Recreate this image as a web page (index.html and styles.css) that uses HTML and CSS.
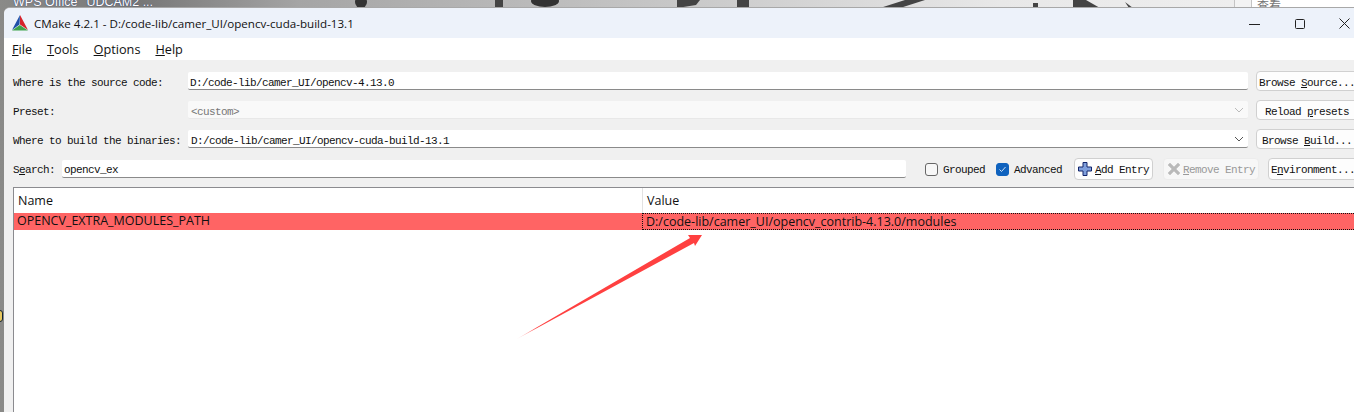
FILE: index.html
```html
<!DOCTYPE html>
<html lang="en">
<head>
    <meta charset="UTF-8">
    <meta name="viewport" content="width=device-width, initial-scale=1.0">
    <title>CMake 4.2.1</title>
    <link rel="stylesheet" href="styles.css">
</head>
<body>

<div class="desktop">
    <!-- bits of wallpaper showing above the window -->
    <svg class="wallpaper" width="1354" height="8" viewBox="0 0 1354 8">
        <ellipse cx="361" cy="2" rx="6" ry="6" fill="#333"/>
        <rect x="495" y="0" width="8" height="8" fill="#444"/>
        <ellipse cx="545" cy="1" rx="14" ry="6" fill="#333"/>
        <path d="M677 0 H700 L696 5 L677 8 Z" fill="#444"/>
        <rect x="737" y="0" width="12" height="8" fill="#444"/>
        <path d="M880 8 L905 0 H925 L900 8 Z" fill="#444"/>
        <rect x="1033" y="3" width="5" height="5" fill="#444"/>
        <path d="M1073 8 V0 H1086 L1100 8 Z" fill="#444"/>
        <path d="M1125 2 L1133 8 H1129 Z" fill="#444"/>
        <rect x="1234" y="0" width="1" height="8" fill="#c4c4c4"/>
        <rect x="1235" y="0" width="16" height="8" fill="#f3f3f3"/>
        <rect x="1251" y="0" width="1" height="8" fill="#c4c4c4"/>
        <rect x="1252" y="0" width="102" height="8" fill="#fff"/>
    </svg>
    <div class="desk-labels"><span>WPS Office</span><span>UDCAM2 ...</span></div>
    <span class="desk-right">查看</span>
    <span class="edge-mark"></span>

    <div class="window">
        <div class="titlebar">
            <svg class="logo" width="16" height="16" viewBox="0 0 16 16">
                <path d="M8 0 L0 15 L7.5 9.5 Z" fill="#1f4fa8"/>
                <path d="M8 0 L16 15 L8 9.5 Z" fill="#d5232b"/>
                <path d="M0 15.5 L7.8 10 L16 15.5 Z" fill="#3fa34a"/>
            </svg>
            <span class="title">CMake 4.2.1 - D:/code-lib/camer_UI/opencv-cuda-build-13.1</span>
            <div class="controls">
                <svg width="11" height="11" viewBox="0 0 11 11"><path d="M0 6.5 H11" stroke="#222" fill="none"/></svg>
                <svg width="11" height="11" viewBox="0 0 11 11"><rect x="1.5" y="1.5" width="9" height="9" rx="1" stroke="#222" fill="none"/></svg>
                <svg width="11" height="11" viewBox="0 0 11 11"><path d="M.5 .5 L10.5 10.5 M10.5 .5 L.5 10.5" stroke="#222" fill="none"/></svg>
            </div>
        </div>

        <div class="menubar">
            <span><u>F</u>ile</span>
            <span><u>T</u>ools</span>
            <span><u>O</u>ptions</span>
            <span><u>H</u>elp</span>
        </div>

        <div class="content">
            <div class="form-row">
                <label class="row-label">Where is the source code:</label>
                <div class="field">D:/code-lib/camer_UI/opencv-4.13.0</div>
                <button class="btn"><span>Browse <u>S</u>ource...</span></button>
            </div>
            <div class="form-row">
                <label class="row-label">Preset:</label>
                <div class="field disabled">&lt;custom&gt;<svg class="chev" width="10" height="6" viewBox="0 0 10 6"><path d="M1 1 L5 5 L9 1" stroke="#bbb" fill="none"/></svg></div>
                <button class="btn"><span>Reload <u>p</u>resets</span></button>
            </div>
            <div class="form-row">
                <label class="row-label">Where to build the binaries:</label>
                <div class="field combo">D:/code-lib/camer_UI/opencv-cuda-build-13.1<svg class="chev" width="10" height="6" viewBox="0 0 10 6"><path d="M1 1 L5 5 L9 1" stroke="#555" fill="none"/></svg></div>
                <button class="btn"><span>Browse <u>B</u>uild...</span></button>
            </div>
            <div class="form-row search-row">
                <label class="row-label">S<u>e</u>arch:</label>
                <div class="field search">opencv_ex</div>
                <label class="check"><span class="box"></span><span class="check-text">Grouped</span></label>
                <label class="check"><span class="box on"><svg width="9" height="9" viewBox="0 0 9 9"><path d="M1.5 4.5 L3.5 6.5 L7.5 2" stroke="#cfe2f7" fill="none"/></svg></span><span class="check-text">Advanced</span></label>
                <button class="btn add">
                    <svg width="14" height="14" viewBox="0 0 14 14"><path d="M5 .5 H9 V5 H13.5 V9 H9 V13.5 H5 V9 H.5 V5 H5 Z" fill="#7f9fdc" stroke="#12246b"/></svg>
                    <span><u>A</u>dd Entry</span>
                </button>
                <button class="btn remove" disabled>
                    <svg width="14" height="14" viewBox="0 0 14 14"><path d="M1 3 L3 1 L7 5 L11 1 L13 3 L9 7 L13 11 L11 13 L7 9 L3 13 L1 11 L5 7 Z" fill="#b9b9b9" stroke="#c9c9c9"/></svg>
                    <span><u>R</u>emove Entry</span>
                </button>
                <button class="btn env"><span>E<u>n</u>vironment...</span></button>
            </div>

            <div class="table">
                <div class="thead">
                    <div class="col-name">Name</div>
                    <div class="col-value">Value</div>
                </div>
                <div class="trow">
                    <div class="col-name">OPENCV_EXTRA_MODULES_PATH</div>
                    <div class="col-value current">D:/code-lib/camer_UI/opencv_contrib-4.13.0/modules</div>
                </div>
            </div>
        </div>
    </div>

    <!-- annotation drawn on top of the screenshot -->
    <svg class="arrow" width="200" height="115" viewBox="0 0 200 115">
        <defs>
            <linearGradient id="fade" gradientUnits="userSpaceOnUse" x1="10" y1="110" x2="190" y2="10">
                <stop offset="0" stop-color="#ff4040" stop-opacity="0"/>
                <stop offset=".12" stop-color="#ff4040"/>
            </linearGradient>
        </defs>
        <path d="M10 110 L185 8 L183 5 L197 5 L190 16 L189 13 Z" fill="url(#fade)"/>
    </svg>
</div>

</body>
</html>
```

FILE: styles.css
```css
* { margin: 0; padding: 0; box-sizing: border-box; }
html, body { width: 100%; height: 100%; overflow: hidden; }

.desktop {
    position: relative; width: 1354px; height: 412px; overflow: hidden;
    background: linear-gradient(90deg, #8a8a88 0, #777 140px, #a5a5a5 300px, #c8c8c8 680px, #e8e8e8 1000px, #eee 1234px);
}
.wallpaper { position: absolute; left: 0; top: 0; }
.desk-labels {
    position: absolute; left: 13px; top: -5px; display: flex; gap: 9px;
    font: 12.5px "Liberation Sans", Arial, sans-serif; color: #fff;
    text-shadow: 0 0 1px #12246b;
}
.desk-right {
    position: absolute; left: 1257px; top: -4px;
    font: 12px "Noto Sans CJK SC", sans-serif; color: #777;
}
.edge-mark {
    position: absolute; left: -3px; top: 310px; width: 6px; height: 12px;
    border: 1px solid #123; border-radius: 3px; background: #e8c860;
}

.window {
    position: absolute; left: 4px; top: 7px; width: 1360px; height: 420px;
    display: flex; flex-direction: column; background: #f0f0f0;
    border-top: 1px solid #a8a8a8; border-top-left-radius: 6px;
}
.titlebar {
    height: 30px; flex: none; display: flex; align-items: center; padding-left: 8px;
    background: #edf2fa; border-top-left-radius: 6px;
}
.logo { margin-right: 6px; }
.title { font: 11.6px "Open Sans", "Noto Sans", sans-serif; color: #111; }
.controls { margin-left: auto; width: 115px; display: flex; gap: 34px; }

.menubar {
    height: 22px; flex: none; background: #fff; display: flex; align-items: center;
    gap: 15px; padding-left: 8px;
    font: 12.7px "Open Sans", "Noto Sans", sans-serif; color: #111;
}

.content { flex: 1; display: flex; flex-direction: column; padding: 12px 0 0 9px; }
.form-row { display: flex; align-items: center; height: 18px; margin-bottom: 11px; }
.row-label, .field, .btn, .check {
    font-family: "Liberation Mono", monospace; font-size: 11px; letter-spacing: -.6px; color: #111;
}
.row-label { width: 175px; flex: none; white-space: pre; padding-top: 4px; }

.field {
    width: 1060px; height: 18px; flex: none; position: relative; background: #fff;
    border-bottom: 1px solid #8a8a8a; border-radius: 2px; padding-left: 2px; line-height: 22px;
}
.field.disabled { background: #f9f9f9; border-bottom-color: #e8e8e8; color: #777; padding-left: 3px; }
.field.combo { padding-left: 3px; }
.chev { position: absolute; right: 4px; top: 6px; }

.btn {
    height: 20px; width: 110px; flex: none; margin-left: 8px; background: #fdfdfd;
    border: 1px solid #d0d0d0; border-radius: 4px; text-align: left; padding-left: 2px;
    display: flex; align-items: center;
}
.btn span { padding-top: 4px; }
.form-row:nth-child(2) .btn { padding-left: 8px; }
.form-row:nth-child(3) .btn { padding-left: 5px; }

.search-row { margin-bottom: 0; margin-top: 1px; }
.search-row .row-label { width: 49px; padding-top: 2px; }
.search-row .btn span, .check-text { padding-top: 2px; }
.field.search { width: 844px; border-bottom-color: #8a8a8a; line-height: 20px; }
.check { display: flex; align-items: center; margin-left: 19px; }
.check + .check { margin-left: 11px; }
.box {
    width: 13px; height: 13px; margin-right: 5px; background: #f7f7f7;
    border: 1px solid #666; border-radius: 3px; display: flex; align-items: center; justify-content: center;
}
.box.on { background: #0f62be; border-color: #0f62be; }
.btn.add { width: 79px; margin-left: 12px; padding-left: 3px; gap: 3px; height: 22px; }
.btn.remove { width: 96px; margin-left: 10px; padding-left: 3px; gap: 2px; height: 22px; color: #999; background: #f7f7f7; border-color: #ececec; }
.btn.env { margin-left: 9px; height: 22px; padding-left: 2px; }

.table { margin-top: 9px; flex: 1; background: #fff; border: 1px solid #8b8b8f; border-right: none; }
.thead, .trow { display: flex; font: 12.5px "Open Sans", "Noto Sans", sans-serif; color: #111; }
.thead { height: 25px; align-items: center; }
.thead .col-value { border-left: 1px solid #e2e2e2; height: 100%; display: flex; align-items: center; }
.col-name { width: 628px; flex: none; padding-left: 4px; }
.trow .col-name { padding-left: 3px; }
.col-value { flex: 1; padding-left: 4px; }
.trow { height: 17px; line-height: 16px; background: #ff6464; }
.trow .current { border: 1px dotted #111; line-height: 15px; padding-left: 3px; }

.arrow { position: absolute; left: 505px; top: 230px; overflow: visible; }
```
